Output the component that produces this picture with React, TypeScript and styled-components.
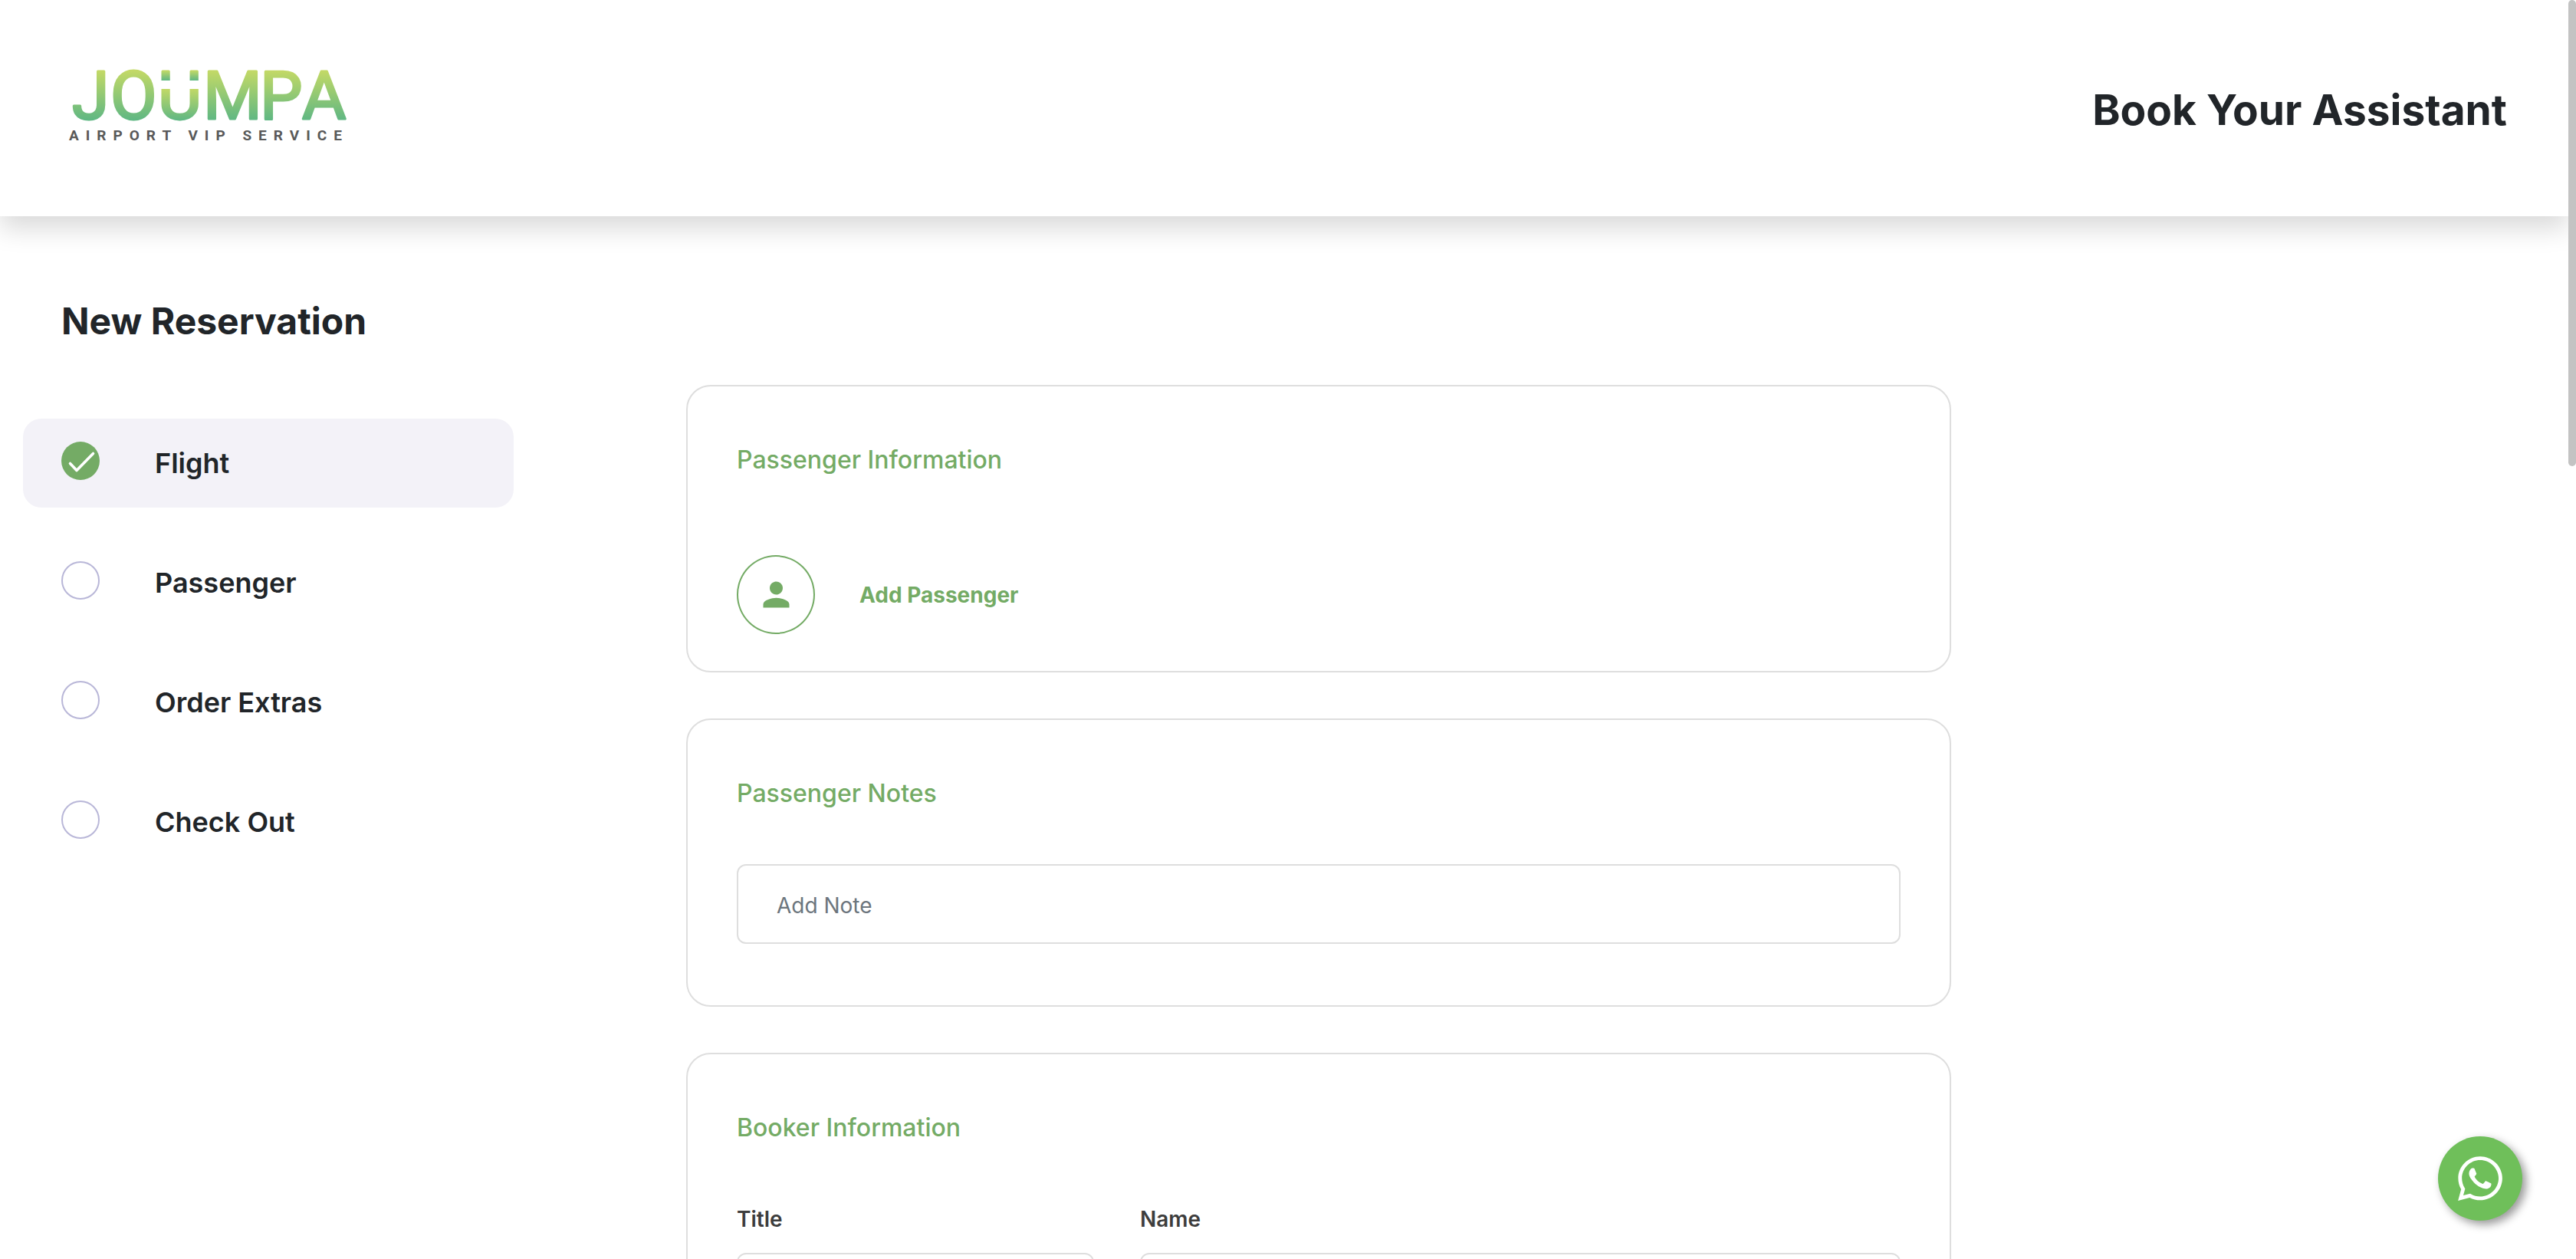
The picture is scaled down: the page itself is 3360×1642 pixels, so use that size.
import React from "react";
import styled, { createGlobalStyle, css } from "styled-components";
import { FaWhatsapp } from "react-icons/fa";
import { MdPerson } from "react-icons/md";

const green = "#74ab65";
const ink = "#212529";
const line = "#dedede";

const GlobalStyle = createGlobalStyle`
  *, *::before, *::after { box-sizing: border-box; }
  body {
    margin: 0;
    background: #fff;
    color: ${ink};
    font-family: Inter, "Liberation Sans", sans-serif;
  }
  button, input, select { font: inherit; color: inherit; }
`;

const Page = styled.div`
  height: 100vh;
  overflow: hidden;
  padding-right: 10px;
`;

const ScrollThumb = styled.div`
  position: fixed;
  top: 0;
  right: 0;
  width: 10px;
  height: 37vh;
  border-radius: 5px;
  background: #c3c3c3;
`;

const Header = styled.header`
  display: flex;
  align-items: center;
  justify-content: space-between;
  padding: 84px 80px 80px;
  box-shadow: 0 16px 32px rgba(0, 0, 0, 0.15);
`;

const Logo = styled.svg`
  display: block;
  width: 380px;
  height: 118px;
  overflow: visible;
  font-family: Roboto, sans-serif;
`;

const PageTitle = styled.h1`
  margin: 0;
  font-size: 55px;
  line-height: 68px;
  font-weight: 700;
`;

const Body = styled.div`
  display: grid;
  grid-template-columns: 128fr 45fr minmax(0, 330fr) 161fr;
  align-items: start;
  padding-left: 30px;
`;

const Sidebar = styled.aside`
  padding-top: 107px;
`;

const SidebarTitle = styled.h2`
  margin: 0 0 97px;
  padding-left: 50px;
  font-size: 48px;
  line-height: 60px;
  font-weight: 700;
  white-space: nowrap;
`;

const Steps = styled.nav`
  display: flex;
  flex-direction: column;
  gap: 40px;
`;

const Step = styled.button<{ $active?: boolean }>`
  display: flex;
  align-items: flex-start;
  gap: 72px;
  padding: 30px 50px;
  border: 0;
  border-radius: 24px;
  background: ${(p) => (p.$active ? "#f3f2f8" : "transparent")};
  font-size: 36px;
  line-height: 56px;
  font-weight: 600;
  text-align: left;
  cursor: pointer;
`;

const StepMark = styled.span<{ $done?: boolean }>`
  flex: none;
  width: 50px;
  height: 50px;
  border-radius: 50%;
  ${(p) =>
    p.$done
      ? css`
          background: ${green};
        `
      : css`
          border: 2px solid #b9b7d8;
        `}

  svg {
    display: block;
  }
`;

const Main = styled.main`
  grid-column: 3;
  display: flex;
  flex-direction: column;
  gap: 60px;
  padding-top: 220px;
`;

const Card = styled.section<{ $bottom: number }>`
  padding: 74px 64px ${(p) => p.$bottom}px;
  border: 2px solid ${line};
  border-radius: 32px;
`;

const CardTitle = styled.h3`
  margin: 0 0 70px;
  color: ${green};
  font-size: 32px;
  line-height: 44px;
  font-weight: 500;
`;

const AddPassenger = styled.button`
  display: flex;
  align-items: center;
  gap: 58px;
  margin-top: 102px;
  padding: 0;
  border: 0;
  background: none;
  color: ${green};
  font-size: 28px;
  line-height: 34px;
  font-weight: 700;
  cursor: pointer;
`;

const Avatar = styled.span`
  display: flex;
  align-items: center;
  justify-content: center;
  width: 102px;
  height: 103px;
  border: 2px solid ${green};
  border-radius: 50%;
  font-size: 51px;
`;

const control = css`
  display: block;
  width: 100%;
  height: 104px;
  padding: 4px 50px 0;
  border: 2px solid ${line};
  border-radius: 12px;
  background: #fff;
  font-size: 28px;
  outline: none;
`;

const TextInput = styled.input`
  ${control}

  &::placeholder {
    color: #6c757d;
    opacity: 1;
  }
`;

const Select = styled.select`
  ${control}
  appearance: none;
`;

const Fields = styled.div`
  display: grid;
  grid-template-columns: repeat(12, minmax(0, 1fr));
  gap: 60px;
  padding-top: 10px;
`;

const Field = styled.div<{ $span: number }>`
  grid-column: span ${(p) => p.$span};
`;

const Label = styled.label`
  display: block;
  margin-bottom: 27px;
  color: #3d3d3d;
  font-size: 28px;
  line-height: 34px;
  font-weight: 600;
`;

const ChatButton = styled.a`
  position: fixed;
  right: 70px;
  bottom: 50px;
  display: flex;
  align-items: center;
  justify-content: center;
  width: 110px;
  height: 110px;
  border-radius: 50%;
  background: #6fbf5a;
  box-shadow: 5px 5px 12px rgba(0, 0, 0, 0.4);
  color: #fff;
  font-size: 66px;
`;

const steps = ["Flight", "Passenger", "Order Extras", "Check Out"];

function JoumpaLogo() {
  return (
    <Logo viewBox="80 84 380 118" role="img" aria-label="Joumpa Airport VIP Service">
      <defs>
        <linearGradient id="word" gradientUnits="userSpaceOnUse" x1="0" y1="92" x2="0" y2="157">
          <stop offset="0" stopColor="#c3d966" />
          <stop offset="1" stopColor="#5fb783" />
        </linearGradient>
        {/* The U restarts the fade below its two dots. */}
        <linearGradient id="smile" gradientUnits="userSpaceOnUse" x1="0" y1="92" x2="0" y2="157">
          <stop offset="0" stopColor="#c3d966" />
          <stop offset="0.2" stopColor="#5fb783" />
          <stop offset="0.36" stopColor="#c3d966" />
          <stop offset="1" stopColor="#5fb783" />
        </linearGradient>
      </defs>
      <g fontSize="88" fontWeight="400" strokeWidth="3" strokeLinejoin="round" fill="url(#word)" stroke="url(#word)">
        <text y="155" x="94 144">JO</text>
        <text y="155" x="206" fill="url(#smile)" stroke="url(#smile)">U</text>
        <text y="155" x="265 339 394">MPA</text>
      </g>
      <rect x="204" y="105" width="62" height="11" fill="#fff" />
      <text x="90" y="183" fontSize="19" fontWeight="700" letterSpacing="9" fill="#595959">
        AIRPORT VIP SERVICE
      </text>
    </Logo>
  );
}

export default function App() {
  return (
    <Page>
      <GlobalStyle />
      <Header>
        <JoumpaLogo />
        <PageTitle>Book Your Assistant</PageTitle>
      </Header>
      <Body>
        <Sidebar>
          <SidebarTitle>New Reservation</SidebarTitle>
          <Steps aria-label="Reservation steps">
            {steps.map((name, i) => (
              <Step key={name} type="button" $active={i === 0}>
                <StepMark $done={i === 0}>
                  {i === 0 && (
                    <svg width="50" height="50" viewBox="0 0 50 50" fill="none" aria-hidden="true">
                      <path
                        d="M11.500 28.500l8.500 9L41.500 15.500"
                        stroke="#fff"
                        strokeWidth="3.600"
                        strokeLinecap="round"
                        strokeLinejoin="round"
                      />
                    </svg>
                  )}
                </StepMark>
                {name}
              </Step>
            ))}
          </Steps>
        </Sidebar>
        <Main>
          <Card $bottom={48}>
            <CardTitle>Passenger Information</CardTitle>
            <AddPassenger type="button">
              <Avatar>
                <MdPerson aria-hidden="true" />
              </Avatar>
              Add Passenger
            </AddPassenger>
          </Card>
          <Card $bottom={80}>
            <CardTitle>Passenger Notes</CardTitle>
            <TextInput type="text" placeholder="Add Note" aria-label="Passenger note" />
          </Card>
          <Card $bottom={80}>
            <CardTitle>Booker Information</CardTitle>
            <Fields>
              <Field $span={4}>
                <Label htmlFor="title">Title</Label>
                <Select id="title" />
              </Field>
              <Field $span={8}>
                <Label htmlFor="name">Name</Label>
                <TextInput id="name" type="text" />
              </Field>
            </Fields>
          </Card>
        </Main>
      </Body>
      <ChatButton href="#chat" aria-label="Chat on WhatsApp">
        <FaWhatsapp aria-hidden="true" />
      </ChatButton>
      <ScrollThumb />
    </Page>
  );
}
